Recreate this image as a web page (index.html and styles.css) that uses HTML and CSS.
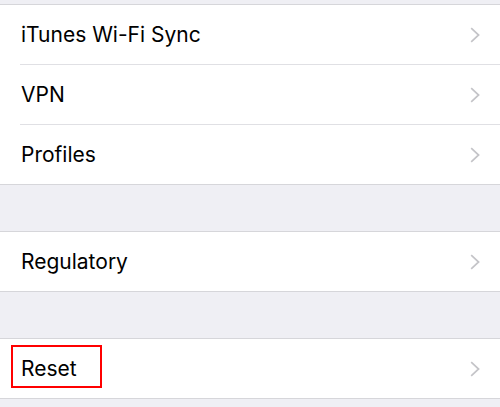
FILE: index.html
```html
<!DOCTYPE html>
<html>
<head>
<meta charset="utf-8">
<link rel="stylesheet" href="styles.css">
</head>
<body>
<div class="page">
  <div class="gap gap-top"></div>
  <div class="group">
    <div class="row"><span class="label">iTunes Wi-Fi Sync</span><svg class="chev" viewBox="0 0 10 16"><path d="M1.2 1.2l7.4 6.8-7.4 6.8" /></svg></div>
    <div class="row"><span class="label">VPN</span><svg class="chev" viewBox="0 0 10 16"><path d="M1.2 1.2l7.4 6.8-7.4 6.8" /></svg></div>
    <div class="row"><span class="label">Profiles</span><svg class="chev" viewBox="0 0 10 16"><path d="M1.2 1.2l7.4 6.8-7.4 6.8" /></svg></div>
  </div>
  <div class="gap"></div>
  <div class="group">
    <div class="row"><span class="label">Regulatory</span><svg class="chev" viewBox="0 0 10 16"><path d="M1.2 1.2l7.4 6.8-7.4 6.8" /></svg></div>
  </div>
  <div class="gap"></div>
  <div class="group">
    <div class="row"><span class="label highlight">Reset</span><svg class="chev" viewBox="0 0 10 16"><path d="M1.2 1.2l7.4 6.8-7.4 6.8" /></svg></div>
  </div>
  <div class="gap"></div>
</div>
</body>
</html>
```
FILE: styles.css
```css
html, body {
  margin: 0;
  padding: 0;
  background: #efeff4;
}
.page {
  width: 500px;
  height: 407px;
  overflow: hidden;
  font-family: Inter, "Liberation Sans", sans-serif;
}
.gap {
  height: 46px;
}
.gap-top {
  height: 4px;
}
.group {
  background: #fff;
  border-top: 1px solid #d6d6da;
  border-bottom: 1px solid #d6d6da;
}
.row {
  height: 59px;
  display: flex;
  align-items: center;
  justify-content: space-between;
  padding: 0 20px 0 21px;
}
.group .row:not(:first-child) {
  border-top: 1px solid #e0e0e4;
  margin-left: 20px;
  padding-left: 1px;
}
.label {
  font-size: 21px;
  color: #000;
}
.highlight {
  position: relative;
}
.highlight::after {
  content: "";
  position: absolute;
  left: -10px;
  top: -11px;
  width: 87px;
  height: 39px;
  border: 2px solid #f00;
}
.chev {
  width: 10px;
  height: 16px;
  fill: none;
  stroke: #c4c4c8;
  stroke-width: 1.7;
}
```
